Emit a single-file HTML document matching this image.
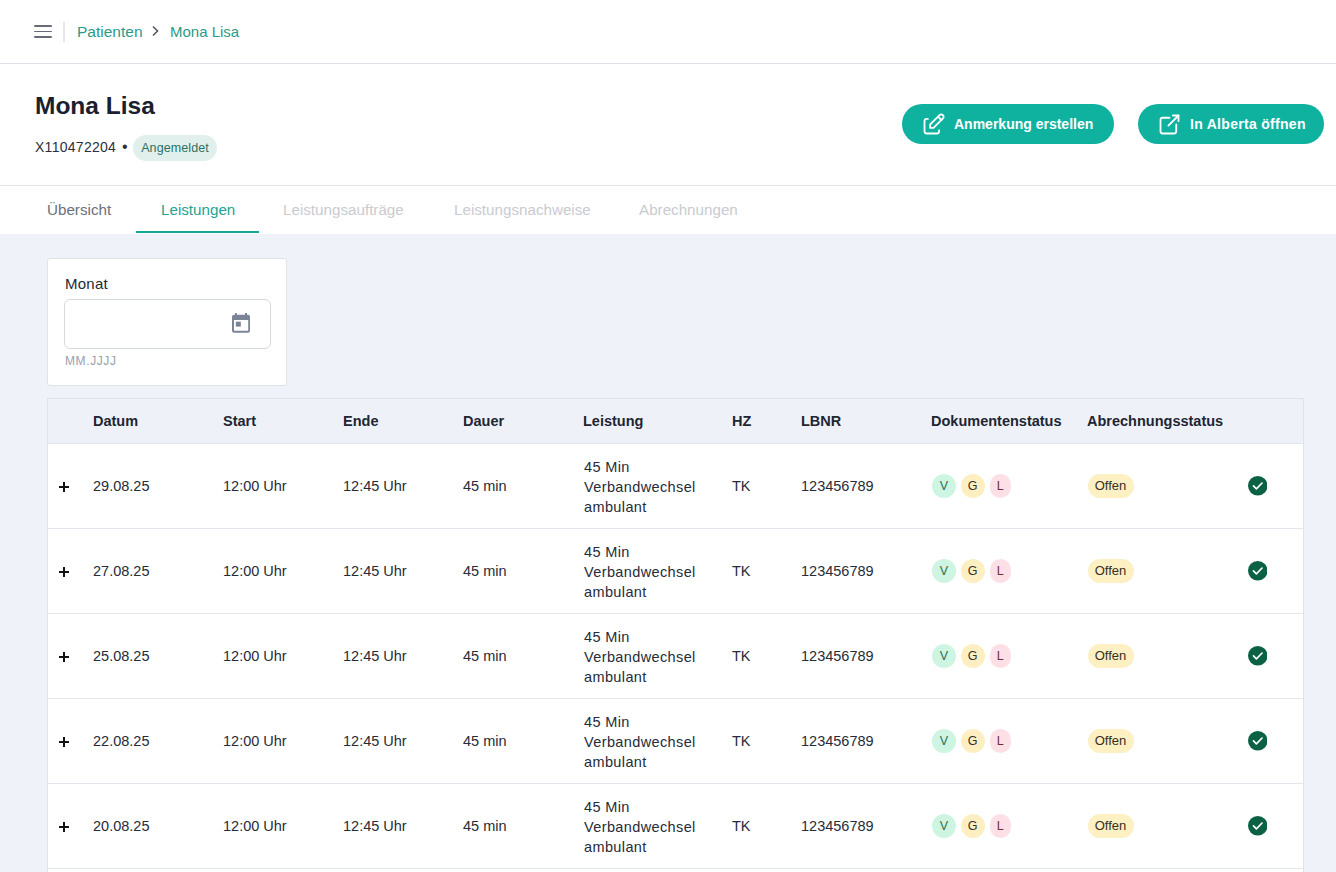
<!DOCTYPE html>
<html lang="de">
<head>
<meta charset="utf-8">
<style>
*{box-sizing:border-box;margin:0;padding:0}
html,body{width:1336px;height:872px;overflow:hidden;background:#eff2f8;font-family:"Liberation Sans",sans-serif;color:#1f2633}
.top{position:absolute;left:0;top:0;width:1336px;height:64px;background:#fff;border-bottom:1px solid #dfe2e8}
.ham{position:absolute;left:34px;top:25px;width:18px;height:13px}
.ham i{position:absolute;left:0;width:18px;height:1.6px;background:#676b75;border-radius:1px}
.vdiv{position:absolute;left:63px;top:22px;width:1.5px;height:20px;background:#e6e7eb}
.crumb{position:absolute;top:23px;font-size:15.5px;color:#2a9a8a;white-space:nowrap;line-height:17px}
.chev{position:absolute;left:150.4px;top:25px;width:10px;height:12px}
.head{position:absolute;left:0;top:64px;width:1336px;height:122px;background:#fff;border-bottom:1px solid #e3e5ea}
.title{position:absolute;left:35px;top:27.5px;font-size:24.5px;font-weight:bold;color:#19202e;line-height:28px;white-space:nowrap}
.pid{position:absolute;left:35px;top:75px;font-size:14px;color:#2b303b;line-height:16px;white-space:nowrap}
.badge{position:absolute;left:133px;top:71px;width:84px;height:26px;border-radius:13px;background:#e1f0ec;color:#2b7266;font-size:12.5px;letter-spacing:0.1px;line-height:26px;text-align:center;white-space:nowrap}
.btn{position:absolute;top:40px;height:40px;border-radius:20px;background:#0fb19f;color:#fff;font-weight:bold;font-size:14px;line-height:40px;white-space:nowrap}
.btn svg{position:absolute;top:7px;width:27px;height:27px}
.btn span{position:absolute;top:0}
.tabs{position:absolute;left:0;top:186px;width:1336px;height:48px;background:#fff}
.tab{position:absolute;top:15px;font-size:15.2px;line-height:17px;white-space:nowrap;color:#c9cbd1}
.uline{position:absolute;left:136px;top:45px;width:123px;height:2.2px;background:#16a896}
.card{position:absolute;left:47px;top:258px;width:240px;height:128px;background:#fff;border:1px solid #dfe2e8;border-radius:3px}
.lbl{position:absolute;left:17px;top:16px;font-size:15px;letter-spacing:0.25px;color:#222834;line-height:17px}
.inp{position:absolute;left:16px;top:40px;width:207px;height:50px;border:1px solid #d6d9df;border-radius:6px}
.hint{position:absolute;left:17px;top:95px;font-size:12px;letter-spacing:0.6px;color:#9aa0ab;line-height:14px}
.tbl{position:absolute;left:47px;top:398px;width:1257px;height:480px;background:#fff;border:1px solid #dfe3ea}
.th{position:absolute;left:0;top:0;width:1255px;height:45px;background:#eef2f8;border-bottom:1px solid #e3e6ec}
.h{position:absolute;top:14px;font-size:14.5px;font-weight:bold;color:#1e2533;line-height:17px;white-space:nowrap}
.row{position:absolute;left:0;width:1255px;height:85px;border-bottom:1px solid #e3e6ec}
.c{position:absolute;top:34px;font-size:14.5px;color:#262c38;line-height:17px;white-space:nowrap}
.ls{position:absolute;left:536px;top:13px;font-size:14.5px;letter-spacing:0.38px;color:#262c38;line-height:20px;white-space:nowrap}
.plus{position:absolute;left:11px;top:38px;width:10px;height:10px}
.plus:before{content:"";position:absolute;left:0;top:3.9px;width:10px;height:2.2px;background:#111318}
.plus:after{content:"";position:absolute;left:3.9px;top:0;width:2.2px;height:10px;background:#111318}
.dot{position:absolute;top:30px;height:24px;border-radius:12px;font-size:12.5px;line-height:24px;text-align:center}
.v{left:884px;width:24px;background:#cdf5e2;color:#2f6e52}
.g{left:912.5px;width:24px;background:#fdefc2;color:#33312a}
.l{left:941.5px;width:21.5px;background:#fde0e5;color:#6e2b3b}
.off{position:absolute;left:1039.5px;top:30px;width:46px;height:24px;border-radius:12px;background:#fdf0c3;color:#35301f;font-size:13px;line-height:24px;text-align:center}
.chk{position:absolute;left:1199.8px;top:32px;width:19.5px;height:19.5px}
</style>
</head>
<body>
<div class="top">
  <div class="ham"><i style="top:0"></i><i style="top:5.5px"></i><i style="top:11px"></i></div>
  <div class="vdiv"></div>
  <div class="crumb" style="left:77px">Patienten</div>
  <svg class="chev" viewBox="0 0 10 12"><path d="M3 1.5 L7.5 6 L3 10.5" fill="none" stroke="#555a64" stroke-width="1.6"/></svg>
  <div class="crumb" style="left:170px;font-size:15px">Mona Lisa</div>
</div>
<div class="head">
  <div class="title">Mona Lisa</div>
  <div class="pid"><span style="letter-spacing:0.28px">X110472204</span><span style="position:absolute;left:87px;top:0;font-size:16px">&#8226;</span></div>
  <div class="badge">Angemeldet</div>
  <div class="btn" style="left:902px;width:212px">
    <svg style="left:18px" viewBox="0 0 24 24" fill="none" stroke="#fff" stroke-width="1.6" stroke-linecap="round" stroke-linejoin="round"><path d="M7 7h-1a2 2 0 0 0 -2 2v9a2 2 0 0 0 2 2h9a2 2 0 0 0 2 -2v-1"/><path d="M20.385 6.585a2.1 2.1 0 0 0 -2.97 -2.97l-8.415 8.385v3h3l8.385 -8.415z"/><path d="M16 5l3 3"/></svg>
    <span style="left:52px">Anmerkung erstellen</span>
  </div>
  <div class="btn" style="left:1138px;width:186px">
    <svg style="left:18px" viewBox="0 0 24 24" fill="none" stroke="#fff" stroke-width="1.6" stroke-linecap="round" stroke-linejoin="round"><path d="M12 6h-6a2 2 0 0 0 -2 2v10a2 2 0 0 0 2 2h10a2 2 0 0 0 2 -2v-6"/><path d="M11 13l9 -9"/><path d="M15 4h5v5"/></svg>
    <span style="left:52px;letter-spacing:0.3px">In Alberta öffnen</span>
  </div>
</div>
<div class="tabs">
  <div class="tab" style="left:47px;color:#6b707a">Übersicht</div>
  <div class="tab" style="left:161px;color:#1fa393">Leistungen</div>
  <div class="tab" style="left:283px">Leistungsaufträge</div>
  <div class="tab" style="left:454px">Leistungsnachweise</div>
  <div class="tab" style="left:639px">Abrechnungen</div>
  <div class="uline"></div>
</div>
<div class="card">
  <div class="lbl">Monat</div>
  <div class="inp">
    <svg style="position:absolute;left:167px;top:13px;width:18px;height:20px" viewBox="0 0 18 20"><g fill="#7b8496"><rect x="3" y="0" width="1.9" height="3"/><rect x="13" y="0" width="2" height="3"/><path fill-rule="evenodd" d="M2 1.8h14a2 2 0 0 1 2 2V17.7a2 2 0 0 1-2 2H2a2 2 0 0 1-2-2V3.8a2 2 0 0 1 2-2zM2 7V17.7h14.2V7z"/><rect x="3.8" y="8.7" width="5" height="4.9"/></g></svg>
  </div>
  <div class="hint">MM.JJJJ</div>
</div>
<div class="tbl">
  <div class="th">
    <div class="h" style="left:45px">Datum</div>
    <div class="h" style="left:175px">Start</div>
    <div class="h" style="left:295px">Ende</div>
    <div class="h" style="left:415px">Dauer</div>
    <div class="h" style="left:535px">Leistung</div>
    <div class="h" style="left:684px">HZ</div>
    <div class="h" style="left:753px">LBNR</div>
    <div class="h" style="left:883px">Dokumentenstatus</div>
    <div class="h" style="left:1039px">Abrechnungsstatus</div>
  </div>
  <div class="row" style="top:45px">
    <div class="plus"></div>
    <div class="c" style="left:45px">29.08.25</div>
    <div class="c" style="left:175px">12:00 Uhr</div>
    <div class="c" style="left:295px">12:45 Uhr</div>
    <div class="c" style="left:415px">45 min</div>
    <div class="ls">45 Min<br>Verbandwechsel<br>ambulant</div>
    <div class="c" style="left:684px">TK</div>
    <div class="c" style="left:753px">123456789</div>
    <div class="dot v">V</div><div class="dot g">G</div><div class="dot l">L</div>
    <div class="off">Offen</div>
    <svg class="chk" viewBox="0 0 20 20"><circle cx="10" cy="10" r="10" fill="#0b6144"/><path d="M5.6 10.2l3 3 5.8-6" fill="none" stroke="#fff" stroke-width="1.7" stroke-linecap="round" stroke-linejoin="round"/></svg>
  </div>
  <div class="row" style="top:130px">
    <div class="plus"></div>
    <div class="c" style="left:45px">27.08.25</div>
    <div class="c" style="left:175px">12:00 Uhr</div>
    <div class="c" style="left:295px">12:45 Uhr</div>
    <div class="c" style="left:415px">45 min</div>
    <div class="ls">45 Min<br>Verbandwechsel<br>ambulant</div>
    <div class="c" style="left:684px">TK</div>
    <div class="c" style="left:753px">123456789</div>
    <div class="dot v">V</div><div class="dot g">G</div><div class="dot l">L</div>
    <div class="off">Offen</div>
    <svg class="chk" viewBox="0 0 20 20"><circle cx="10" cy="10" r="10" fill="#0b6144"/><path d="M5.6 10.2l3 3 5.8-6" fill="none" stroke="#fff" stroke-width="1.7" stroke-linecap="round" stroke-linejoin="round"/></svg>
  </div>
  <div class="row" style="top:215px">
    <div class="plus"></div>
    <div class="c" style="left:45px">25.08.25</div>
    <div class="c" style="left:175px">12:00 Uhr</div>
    <div class="c" style="left:295px">12:45 Uhr</div>
    <div class="c" style="left:415px">45 min</div>
    <div class="ls">45 Min<br>Verbandwechsel<br>ambulant</div>
    <div class="c" style="left:684px">TK</div>
    <div class="c" style="left:753px">123456789</div>
    <div class="dot v">V</div><div class="dot g">G</div><div class="dot l">L</div>
    <div class="off">Offen</div>
    <svg class="chk" viewBox="0 0 20 20"><circle cx="10" cy="10" r="10" fill="#0b6144"/><path d="M5.6 10.2l3 3 5.8-6" fill="none" stroke="#fff" stroke-width="1.7" stroke-linecap="round" stroke-linejoin="round"/></svg>
  </div>
  <div class="row" style="top:300px">
    <div class="plus"></div>
    <div class="c" style="left:45px">22.08.25</div>
    <div class="c" style="left:175px">12:00 Uhr</div>
    <div class="c" style="left:295px">12:45 Uhr</div>
    <div class="c" style="left:415px">45 min</div>
    <div class="ls">45 Min<br>Verbandwechsel<br>ambulant</div>
    <div class="c" style="left:684px">TK</div>
    <div class="c" style="left:753px">123456789</div>
    <div class="dot v">V</div><div class="dot g">G</div><div class="dot l">L</div>
    <div class="off">Offen</div>
    <svg class="chk" viewBox="0 0 20 20"><circle cx="10" cy="10" r="10" fill="#0b6144"/><path d="M5.6 10.2l3 3 5.8-6" fill="none" stroke="#fff" stroke-width="1.7" stroke-linecap="round" stroke-linejoin="round"/></svg>
  </div>
  <div class="row" style="top:385px">
    <div class="plus"></div>
    <div class="c" style="left:45px">20.08.25</div>
    <div class="c" style="left:175px">12:00 Uhr</div>
    <div class="c" style="left:295px">12:45 Uhr</div>
    <div class="c" style="left:415px">45 min</div>
    <div class="ls">45 Min<br>Verbandwechsel<br>ambulant</div>
    <div class="c" style="left:684px">TK</div>
    <div class="c" style="left:753px">123456789</div>
    <div class="dot v">V</div><div class="dot g">G</div><div class="dot l">L</div>
    <div class="off">Offen</div>
    <svg class="chk" viewBox="0 0 20 20"><circle cx="10" cy="10" r="10" fill="#0b6144"/><path d="M5.6 10.2l3 3 5.8-6" fill="none" stroke="#fff" stroke-width="1.7" stroke-linecap="round" stroke-linejoin="round"/></svg>
  </div>
  <div class="row" style="top:470px">
    <div class="plus"></div>
    <div class="c" style="left:45px">18.08.25</div>
    <div class="c" style="left:175px">12:00 Uhr</div>
    <div class="c" style="left:295px">12:45 Uhr</div>
    <div class="c" style="left:415px">45 min</div>
    <div class="ls">45 Min<br>Verbandwechsel<br>ambulant</div>
    <div class="c" style="left:684px">TK</div>
    <div class="c" style="left:753px">123456789</div>
    <div class="dot v">V</div><div class="dot g">G</div><div class="dot l">L</div>
    <div class="off">Offen</div>
    <svg class="chk" viewBox="0 0 20 20"><circle cx="10" cy="10" r="10" fill="#0b6144"/><path d="M5.6 10.2l3 3 5.8-6" fill="none" stroke="#fff" stroke-width="1.7" stroke-linecap="round" stroke-linejoin="round"/></svg>
  </div>
</div>
</body>
</html>
